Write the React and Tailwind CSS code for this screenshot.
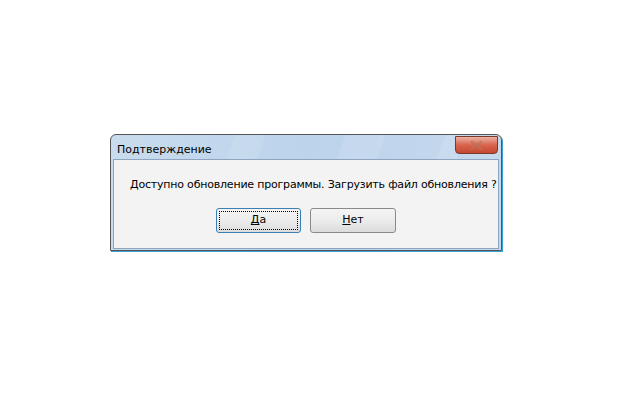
import React from 'react';

const font = { fontFamily: '"DejaVu Sans", Tahoma, sans-serif' };

const Button = ({ children, focused }) => (
  <button
    className={
      focused
        ? 'w-[85px] h-[25px] rounded-[3px] border border-[#3c7fb1] bg-gradient-to-b from-[#f4f4f4] via-[#ececec] to-[#dcdcdc] p-[2px] text-[11px] text-black'
        : 'w-[86px] h-[25px] rounded-[3px] border border-[#8a8a8a] bg-gradient-to-b from-[#f4f4f4] via-[#ececec] to-[#dcdcdc] p-[2px] text-[11px] text-black'
    }
  >
    <div
      className={
        focused
          ? 'flex h-full w-full items-center justify-center border border-dotted border-black'
          : 'flex h-full w-full items-center justify-center'
      }
    >
      {children}
    </div>
  </button>
);

export default function App() {
  return (
    <div className="w-[640px] h-[400px] bg-white relative" style={font}>
      <div className="flex pt-[134px] pl-[110px]">
        <div className="relative w-[392px] overflow-hidden rounded-t-[6px] border border-[#555] bg-gradient-to-r from-[#c9dcee] via-[#bcd3eb] to-[#c6d9ed] shadow-[1px_1px_0_#3aa0d8]">
          <div className="pointer-events-none absolute left-[120px] top-0 h-[25px] w-[30px] -skew-x-[20deg] bg-white/10" />
          <div className="pointer-events-none absolute left-[230px] top-0 h-[25px] w-[40px] -skew-x-[20deg] bg-white/10" />
          <div className="pointer-events-none absolute left-[330px] top-0 h-[25px] w-[20px] -skew-x-[20deg] bg-white/10" />
          <div className="relative flex h-[24px] items-start justify-between pl-[6px] pr-[3px]">
            <span className="mt-[8px] text-[11px] leading-[13px] text-black">Подтверждение</span>
            <div className="mt-[1px] flex h-[18px] w-[43px] items-center justify-center rounded-b-[4px] border border-[#7a3a2e] bg-gradient-to-b from-[#eab0a2] via-[#d8654c] to-[#c4482f]">
              <svg width="13" height="11" viewBox="0 0 13 11">
                <path d="M2 1 L6.5 4.5 L11 1 L12 2 L8 5.5 L12 9 L11 10 L6.5 6.5 L2 10 L1 9 L5 5.5 L1 2 Z" fill="none" stroke="#b5735f" strokeWidth="1" />
              </svg>
            </div>
          </div>
          <div className="relative mx-[2px] mb-[1px] border border-[#8da5bf] bg-[#f3f3f3] pt-[18px] pb-[15px]">
            <p className="whitespace-nowrap pl-[16px] text-[11px] leading-[14px] tracking-[-0.2px] text-black">
              Доступно обновление программы. Загрузить файл обновления ?
            </p>
            <div className="mt-[16px] flex justify-start gap-[9px] pl-[102px]">
              <Button focused>
                <span className="underline">Д</span>а
              </Button>
              <Button>
                <span className="underline">Н</span>ет
              </Button>
            </div>
          </div>
        </div>
      </div>
    </div>
  );
}
